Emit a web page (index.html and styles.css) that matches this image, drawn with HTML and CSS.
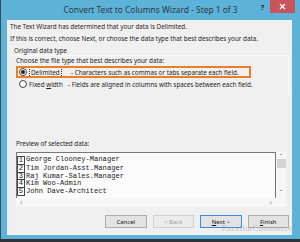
FILE: index.html
```html
<!DOCTYPE html>
<html>
<head>
<meta charset="utf-8">
<link rel="stylesheet" href="styles.css">
</head>
<body>
<div class="window">
  <div class="titlebar">
    <div></div>
    <div class="title">Convert Text to Columns Wizard - Step 1 of 3</div>
    <div class="controls">
      <span class="help">?</span>
      <span class="close"><svg width="7" height="7" viewBox="0 0 7 7"><path d="M1 1L6 6M6 1L1 6" stroke="#fff" stroke-width="1.3"/></svg></span>
    </div>
  </div>
  <div class="dialog">
    <p class="line l1">The Text Wizard has determined that your data is Delimited.</p>
    <p class="line l2">If this is correct, choose Next, or choose the data type that best describes your data.</p>
    <p class="line legend">Original data type</p>
    <div class="group">
      <p class="line choose">Choose the file type that best describes your data:</p>
      <div class="opt opt1">
        <span class="radio checked"></span>
        <span class="optname"><span class="focus"><u>D</u>elimited</span></span>
        <span class="desc">- Characters such as commas or tabs separate each field.</span>
      </div>
      <div class="opt opt2">
        <span class="radio"></span>
        <span class="optname">Fixed <u>w</u>idth</span>
        <span class="desc desc2">- Fields are aligned in columns with spaces between each field.</span>
      </div>
    </div>
    <p class="line plabel">Preview of selected data:</p>
    <div class="preview">
      <div class="pmain">
        <div class="rows">
          <div class="row"><span class="num">1</span><span class="txt">George Clooney-Manager</span></div>
          <div class="row"><span class="num">2</span><span class="txt">Tim Jordan-Asst.Manager</span></div>
          <div class="row"><span class="num">3</span><span class="txt">Raj Kumar-Sales.Manager</span></div>
          <div class="row"><span class="num">4</span><span class="txt">Kim Woo-Admin</span></div>
          <div class="row"><span class="num">5</span><span class="txt">John Dave-Architect</span></div>
        </div>
        <div class="vscroll">
          <span class="arr">&#710;</span>
          <span class="thumb"></span>
          <span class="fill"></span>
          <span class="arr down">&#711;</span>
        </div>
      </div>
      <div class="hscroll"><span>&lsaquo;</span><span>&rsaquo;</span></div>
    </div>
    <div class="buttons">
      <button class="btn">Cancel</button>
      <button class="btn disabled">&lt; Back</button>
      <button class="btn default"><u>N</u>ext &gt;</button>
      <button class="btn"><u>F</u>inish</button>
    </div>
    <div class="watermark">ExcelforCommerce</div>
  </div>
</div>
</body>
</html>
```
FILE: styles.css
```css
* { box-sizing: border-box; }
html, body { margin: 0; padding: 0; }
body {
  width: 300px;
  height: 242px;
  background: #2e3338;
  font-family: "Noto Sans", "DejaVu Sans", sans-serif;
  color: #1e1e1e;
  overflow: hidden;
}
.window {
  height: 239px;
  background: #5db2d8;
  display: flex;
  flex-direction: column;
  border-left: 1px solid #3a4c58;
}
.titlebar {
  height: 20px;
  display: grid;
  grid-template-columns: 1fr auto 1fr;
}
.title {
  font-size: 8.4px;
  color: #2a3a46;
  padding-top: 4px;
  white-space: nowrap;
}
.controls {
  display: flex;
  justify-content: flex-end;
  align-items: flex-start;
  padding-right: 5px;
}
.help {
  font-size: 7px;
  font-weight: bold;
  color: #223;
  padding-top: 3px;
  margin-right: 6px;
}
.close {
  width: 25px;
  height: 13px;
  background: #c9545a;
  display: flex;
  align-items: center;
  justify-content: center;
}
.dialog {
  position: relative;
  flex: 1;
  background: #f0f0f0;
  margin: 0 8px 4px 6px;
  padding: 0 3px 0 3px;
  font-size: 6.3px;
}
.line { margin: 0; white-space: nowrap; line-height: 8px; }
.l1 { padding-top: 3px; }
.l2 { margin-top: 4px; }
.legend { margin-top: 4px; padding-left: 4px; }
.group {
  margin-top: 0;
  border-top: 1px solid #fafafa;
  border-right: 1px solid #fafafa;
  height: 40px;
  padding-left: 6px;
}
.choose { margin-top: 1px; }
.opt {
  display: flex;
  align-items: center;
  height: 10px;
  padding-left: 3px;
}
.opt1 {
  margin-top: 2px;
  outline: 2px solid #e8802a;
  outline-offset: -1px;
  width: 233px;
  margin-left: 1px;
  padding-left: 2px;
}
.opt2 { margin-top: 2px; }
.radio {
  width: 8px;
  height: 8px;
  border-radius: 50%;
  border: 1px solid #444;
  background: #fff;
  display: inline-flex;
  align-items: center;
  justify-content: center;
  flex: none;
}
.radio.checked::after {
  content: "";
  width: 4px;
  height: 4px;
  border-radius: 50%;
  background: #222;
}
.optname { width: 44px; padding-left: 2px; white-space: nowrap; }
.focus { border: 1px dotted #333; padding: 0 1px; }
.desc { white-space: nowrap; }
.desc2 { margin-left: -3px; }
.plabel { margin-top: 45px; padding-left: 6px; }
.preview {
  margin: 4px 7px 0 6px;
  width: 270px;
  height: 55px;
  background: #f7f7f7;
  display: flex;
  flex-direction: column;
}
.pmain { display: flex; flex: 1; }
.rows {
  flex: 1;
  background: #fbfbfb;
  border: 1px solid #777;
  border-bottom: none;
  padding-top: 3px;
  font-family: "Liberation Mono", monospace;
  font-size: 7.1px;
  line-height: 7.8px;
}
.row { display: flex; white-space: nowrap; }
.num {
  width: 8px;
  border: 1px solid #444;
  border-top: none;
  text-align: center;
  line-height: 6.8px;
}
.row:first-child .num { border-top: 1px solid #444; }
.txt { padding-left: 1px; }
.vscroll {
  width: 10px;
  display: flex;
  flex-direction: column;
  align-items: center;
  font-size: 7px;
  color: #555;
}
.arr { height: 7px; line-height: 9px; }
.arr.down { line-height: 4px; }
.thumb { width: 9px; height: 9px; background: #d4d4d4; }
.fill { flex: 1; }
.hscroll {
  height: 9px;
  display: flex;
  justify-content: space-between;
  padding: 0 14px 0 4px;
  font-size: 8px;
  color: #999;
  line-height: 8px;
}
.buttons {
  display: flex;
  margin-top: 8px;
  padding-left: 95px;
  gap: 6px;
}
.btn {
  font-family: "Noto Sans", sans-serif;
  font-size: 6px;
  width: 42px;
  height: 13px;
  padding: 0;
  background: #e3e3e3;
  border: 1px solid #adadad;
  color: #111;
  border-radius: 0;
}
.btn.disabled { color: #a0a0a0; border-color: #d0d0d0; background: #ececec; }
.btn.default { border-color: #3c8fd6; }
.watermark {
  position: absolute;
  right: 0;
  bottom: 2px;
  font-family: "Liberation Serif", serif;
  font-size: 9px;
  color: rgba(120,120,120,0.4);
}
```
